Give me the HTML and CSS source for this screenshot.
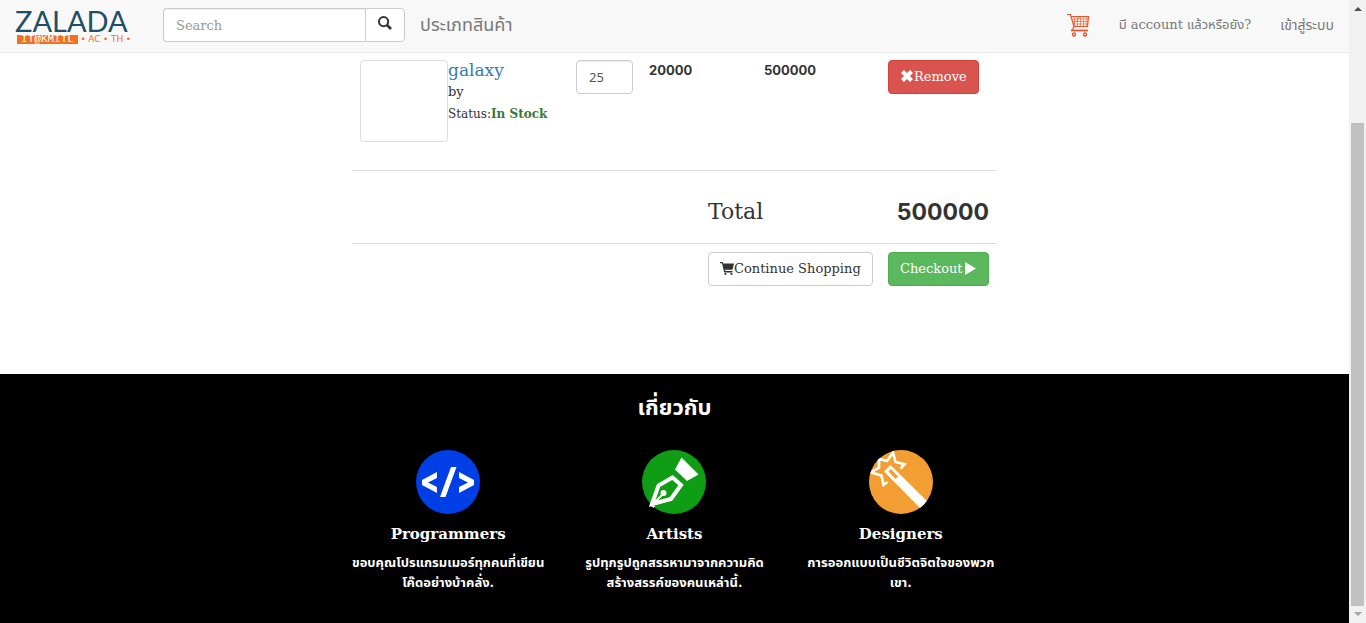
FILE: index.html
```html
<!DOCTYPE html>
<html lang="th">
<head>
<meta charset="utf-8">
<title>ZALADA</title>
<link rel="stylesheet" href="styles.css">
</head>
<body>
<div class="page">
  <header class="navbar">
    <a class="brand" href="#">
      <span class="brand-name">ZALADA</span>
      <span class="brand-sub"><span class="brand-tag">IT@KMITL</span><span>•</span><span>AC</span><span>•</span><span>TH</span><span>•</span></span>
    </a>
    <form class="search">
      <input class="search-input" type="text" placeholder="Search" aria-label="Search">
      <button class="search-btn" type="button" aria-label="Submit search">
        <svg width="14" height="14" viewBox="0 0 14 14"><circle cx="5.6" cy="5.6" r="4.6" fill="none" stroke="#333" stroke-width="2"/><path d="M9 9l4 4" stroke="#333" stroke-width="2.6"/></svg>
      </button>
    </form>
    <a class="nav-category" href="#">ประเภทสินค้า</a>
    <nav class="nav-right">
      <a href="#" class="nav-cart" aria-label="Cart">
        <svg width="24" height="24" viewBox="0 0 24 24" fill="none" stroke="#e8552d">
          <path d="M1 1.500h3.500l3.500 12.500M5 3.500h17.500l-1 10H8L6 17.500" stroke-width="1.200"/>
          <path d="M6 6h16M6.500 8.500h15.500M7.500 11h14M8.500 3.500v10M11.500 3.500v10M14.500 3.500v10M17.500 3.500v10M20.200 3.500v10M7 11l7-7" stroke-width=".6"/>
          <path d="M5 17.500h17" stroke-width="1.800"/>
          <circle cx="8" cy="21.500" r="1.500" stroke-width="1.400"/><circle cx="19" cy="21.500" r="1.500" stroke-width="1.400"/>
        </svg>
      </a>
      <a href="#">มี account แล้วหรือยัง?</a>
      <a class="nav-login" href="#">เข้าสู่ระบบ</a>
    </nav>
  </header>

  <main class="cart">
    <table class="cart-table">
      <colgroup><col class="c-product"><col class="c-qty"><col class="c-price"><col class="c-sum"><col class="c-action"></colgroup>
      <tbody>
        <tr class="item-row">
          <td>
            <div class="media">
              <a class="thumb" href="#" aria-label="galaxy"></a>
              <div class="media-body">
                <h4 class="item-name"><a href="#">galaxy</a></h4>
                <h5 class="item-by">by</h5>
                <div class="item-status">Status:<strong>In Stock</strong></div>
              </div>
            </div>
          </td>
          <td><input class="qty" type="text" value="25" aria-label="Quantity"></td>
          <td class="amount">20000</td>
          <td class="amount">500000</td>
          <td><button class="btn btn-danger" type="button"><svg width="14" height="14" viewBox="0 0 14 14"><path d="M2.500 1.500l9 9M11.500 1.500l-9 9" stroke="#fff" stroke-width="4.200"/></svg>Remove</button></td>
        </tr>
        <tr class="total-row">
          <td></td><td></td><td></td>
          <td><h3>Total</h3></td>
          <td class="grand">500000</td>
        </tr>
        <tr>
          <td></td><td></td><td></td>
          <td><button class="btn btn-default" type="button"><svg width="14" height="14" viewBox="0 0 14 14"><path d="M0 0h2.700l.6 1.400H14l-1.500 6.400H5l.3 1.200h7.200v1.400H4.200L2 1.200H0z" fill="#333"/><circle cx="5.400" cy="12" r="1.100" fill="#333"/><circle cx="11.400" cy="12" r="1.100" fill="#333"/></svg>Continue Shopping</button></td>
          <td><button class="btn btn-success" type="button">Checkout<svg width="14" height="14" viewBox="0 0 14 14"><path d="M2 0v13L13 6.500z" fill="#fff"/></svg></button></td>
        </tr>
      </tbody>
    </table>
  </main>

  <footer class="footer">
    <h3 class="footer-title">เกี่ยวกับ</h3>
    <div class="team">
      <section class="member">
        <svg width="64" height="64" viewBox="0 0 64 64"><circle cx="32" cy="32" r="32" fill="#003ee6"/><path d="M21 22v6l-9 4.500 9 4.500v6L6 35v-5zM43 22v6l9 4.500-9 4.500v6l15-8v-5zM35 17h5.500l-11 30H24z" fill="#fff"/></svg>
        <h4>Programmers</h4>
        <p>ขอบคุณโปรแกรมเมอร์ทุกคนที่เขียน<br>โค๊ดอย่างบ้าคลั่ง.</p>
      </section>
      <section class="member">
        <svg width="64" height="64" viewBox="0 0 64 64"><circle cx="32" cy="32" r="32" fill="#0e9d14"/><path d="M39.500 7.500L56.500 24.500 45 31 33 19.500z" fill="#fff"/><path d="M10 54l6.500-18.500L30.500 27.500l8.500 7.500L29 49z" fill="none" stroke="#fff" stroke-width="4"/><path d="M9 56l12-12" stroke="#fff" stroke-width="2"/><circle cx="21.500" cy="43" r="3" fill="#fff"/><path d="M8 52l5 4.500-2 1.500z" fill="#fff"/></svg>
        <h4>Artists</h4>
        <p>รูปทุกรูปถูกสรรหามาจากความคิด<br>สร้างสรรค์ของคนเหล่านี้.</p>
      </section>
      <section class="member">
        <svg width="64" height="64" viewBox="0 0 64 64"><defs><clipPath id="disc"><circle cx="32" cy="32" r="32"/></clipPath></defs><circle cx="32" cy="32" r="32" fill="#f39e33"/><g clip-path="url(#disc)"><path d="M15 21.500l6.500-6.500L60 53l-7 7z" fill="#fff"/><path d="M19.500 21.500l2.500-2.500 7 7.500-2.500 2.500z" fill="#f39e33"/><path d="M18.500 32l-4 3-2-9.500-10.500-3 8-5V9l8 2 6-8.500 2.500 9.500 9 2.200-4 4.300" fill="none" stroke="#fff" stroke-width="2.600"/></g></svg>
        <h4>Designers</h4>
        <p>การออกแบบเป็นชีวิตจิตใจของพวก<br>เขา.</p>
      </section>
    </div>
  </footer>
</div>
<div class="scrollbar" aria-hidden="true">
  <svg width="17" height="17" viewBox="0 0 17 17"><path d="M5 11l4-4 4 4z" fill="#505050"/></svg>
  <div class="track"><div class="thumb-bar"></div></div>
  <svg width="17" height="17" viewBox="0 0 17 17"><path d="M5 6l4 4 4-4z" fill="#a3a3a3"/></svg>
</div>
</body>
</html>
```

FILE: styles.css
```css
* { box-sizing: border-box; }

body {
  margin: 0;
  min-height: 100vh;
  display: flex;
  background: #fff;
  color: #333;
  font-family: "DejaVu Serif", "Noto Sans Thai", "Noto Sans", serif;
  font-size: 13px;
  line-height: 20px;
}

h3, h4, h5, p { margin: 0; }
a { color: inherit; text-decoration: none; }
input, button { font: inherit; }
svg { flex: none; }

.page {
  flex: 1;
  min-width: 0;
  display: flex;
  flex-direction: column;
}

/* Navigation */
.navbar {
  display: flex;
  align-items: center;
  height: 53px;
  padding: 0 15px 2px;
  background: #f8f8f8;
  border-bottom: 1px solid #e7e7e7;
  color: #777;
}

.brand {
  width: 116px;
  margin-right: 32px;
  display: flex;
  flex-direction: column;
}

.brand-name {
  font: 400 29px/28px Lato, sans-serif;
  color: #1f4e66;
}

.brand-sub {
  display: flex;
  justify-content: space-between;
  padding-left: 2px;
  font: 9px/9px "DejaVu Sans", sans-serif;
  color: #f37021;
}

.brand-tag {
  width: 61px;
  text-align: center;
  background: #f37021;
  color: #fff;
  font: 11px/9px "Liberation Mono", monospace;
}

.search { display: flex; }

.search-input {
  width: 202px;
  height: 34px;
  padding: 6px 12px;
  border: 1px solid #ccc;
  border-right: 0;
  border-radius: 4px 0 0 4px;
  box-shadow: inset 0 1px 1px rgba(0, 0, 0, .075);
}

.search-input::placeholder { color: #999; }

.search-btn {
  width: 40px;
  padding: 0 0 5px;
  display: flex;
  align-items: center;
  justify-content: center;
  border: 1px solid #ccc;
  border-radius: 0 4px 4px 0;
  background: #fff;
}

.nav-category {
  margin-left: 15px;
  font-size: 18px;
}

.nav-right {
  margin-left: auto;
  display: flex;
  align-items: center;
  gap: 29px;
}

.nav-cart { display: flex; }
.nav-login { font-size: 14px; }

/* Cart */
.cart {
  width: 645px;
  max-width: 100%;
  margin: 0 auto;
  padding-bottom: 80px;
}

.cart-table {
  width: 100%;
  border-collapse: collapse;
  table-layout: fixed;
}

.c-product { width: 216px; }
.c-qty { width: 73px; }
.c-price { width: 59px; }
.c-sum { width: 180px; }
.c-action { width: 117px; }

.cart-table td {
  padding: 8px;
  vertical-align: top;
  border-top: 1px solid #ddd;
}

.cart-table .item-row td { border-top: 0; padding-top: 7px; }
.item-row { height: 117px; }
.total-row { height: 73px; }

.media { display: flex; }

.thumb {
  width: 88px;
  height: 82px;
  border: 1px solid #ddd;
  border-radius: 4px;
}

.item-name {
  font-size: 17px;
  line-height: 20px;
  font-weight: 500;
  color: #337ab7;
}

.item-by {
  margin-top: 2px;
  font-size: 13px;
  font-weight: 500;
}

.item-status {
  margin-top: 2px;
  font-size: 12px;
  white-space: nowrap;
}

.item-status strong { color: #3c763d; }

.qty {
  width: 57px;
  height: 34px;
  padding: 6px 12px;
  border: 1px solid #ccc;
  border-radius: 4px;
  box-shadow: inset 0 1px 1px rgba(0, 0, 0, .075);
  color: #555;
  font-family: "Noto Sans", sans-serif;
}

.amount {
  text-align: center;
  font-family: Inter, sans-serif;
  font-weight: 700;
}

.total-row h3 {
  padding-top: 20px;
  font-size: 22px;
  line-height: 26px;
  font-weight: 500;
}

.cart-table .grand {
  padding-top: 28px;
  text-align: right;
  font: 700 23px/26px Inter, sans-serif;
}

.btn {
  height: 34px;
  padding: 0 11px;
  display: inline-flex;
  align-items: center;
  border: 1px solid #ccc;
  border-radius: 4px;
  background: #fff;
  color: #333;
  white-space: nowrap;
}

.btn-danger { background: #d9534f; border-color: #d43f3a; color: #fff; }
.btn-success { background: #5cb85c; border-color: #4cae4c; color: #fff; }

/* Footer */
.footer {
  flex: 1;
  padding: 20px 15px;
  background: #000;
  color: #fff;
  text-align: center;
}

.footer-title {
  font-size: 22px;
  line-height: 26px;
}

.team {
  max-width: 679px;
  margin: 30px auto 0;
  display: grid;
  grid-template-columns: repeat(3, 1fr);
}

.member svg { display: block; margin: 0 auto; }

.member h4 {
  margin-top: 10px;
  font-size: 15px;
  line-height: 20px;
}

.member p {
  margin-top: 9px;
  font-weight: 700;
  white-space: nowrap;
}

/* Scroll bar */
.scrollbar {
  width: 17px;
  display: flex;
  flex-direction: column;
  background: #f1f1f1;
}

.track {
  flex: 1;
  padding: 0 2px;
  display: flex;
  flex-direction: column;
  justify-content: flex-end;
}

.thumb-bar { height: 82%; background: #c1c1c1; }
```
